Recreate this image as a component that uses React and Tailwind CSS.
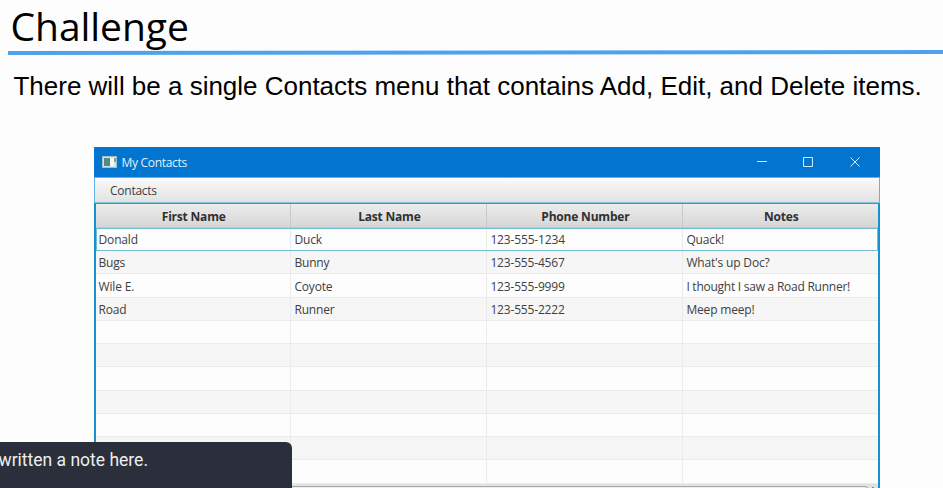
const columns = ['First Name', 'Last Name', 'Phone Number', 'Notes'];

const contacts = [
  ['Bugs', 'Bunny', '123-555-4567', "What's up Doc?"],
  ['Wile E.', 'Coyote', '123-555-9999', 'I thought I saw a Road Runner!'],
  ['Road', 'Runner', '123-555-2222', 'Meep meep!'],
  ['', '', '', ''],
  ['', '', '', ''],
  ['', '', '', ''],
  ['', '', '', ''],
  ['', '', '', ''],
  ['', '', '', ''],
  ['', '', '', ''],
];

const grid = 'grid grid-cols-[195.4px_196px_196px_1fr]';

function TitleBar() {
  return (
    <div className="flex h-[30px] shrink-0 items-center bg-[#0175cf] pl-2 text-[#e4f1fb]">
      <svg width="15" height="12" viewBox="0 0 15 12" className="shrink-0">
        <rect width="15" height="12" fill="#d8e3e3" />
        <rect x="0.5" y="0.5" width="14" height="11" fill="none" stroke="#a9bfc6" />
        <rect x="2" y="2" width="6" height="8" fill="#4d8d83" />
        <rect x="8" y="2" width="4" height="8" fill="#f5f7f5" />
        <rect x="12" y="2" width="2" height="4" fill="#69aa99" />
      </svg>
      <span className="ml-[4.5px] pt-[2px] text-[12px] tracking-[-0.3px]">My Contacts</span>
      <svg width="104" height="10" viewBox="0 0 104 10" className="mr-[20px] ml-auto" fill="none" stroke="#d5eafa">
        <path d="M1 4.5h10" />
        <path d="M47.5.5h9v9h-9z" />
        <path d="m94.5.5 9 9m0-9-9 9" />
      </svg>
    </div>
  );
}

function Contacts() {
  return (
    <div className="ml-[94px] flex h-[341px] w-[786px] flex-col overflow-hidden font-['Open_Sans','Noto_Sans',sans-serif] text-[12px] text-[#404040]">
      <TitleBar />
      <div className="flex h-[25px] shrink-0 items-center border-x border-t border-[#64b0e7] bg-linear-to-b from-[#fafafa] to-[#e2e2e2] pl-[15px]">
        <span className="pt-[2px] tracking-[-0.25px]">Contacts</span>
      </div>
      <div className="h-px shrink-0 bg-[#83c5d2]" />
      <div className="flex flex-1 flex-col border-x-2 border-t border-x-[#1592cf] border-t-[#2b9fbd] bg-[#fdfdfd]">
        <div className={`${grid} h-[24px] shrink-0 border-b border-[#c3c8c9] bg-linear-to-b from-[#ececec] to-[#d6d6d6]`}>
          {columns.map((name) => (
            <div key={name} className="flex items-center justify-center border-r border-[#c9c9c9] pt-[3px] pl-px text-[12px] font-bold tracking-[-0.2px] text-[#303030] last:border-r-0">
              {name}
            </div>
          ))}
        </div>
        <div className={`${grid} h-[23px] shrink-0 bg-[#fdfdfd] outline -outline-offset-1 outline-[#73bfd0]`}>
          {['Donald', 'Duck', '123-555-1234', 'Quack!'].map((value) => (
            <div key={value} className="flex items-center border-r border-[#e8e8e8] pl-[3px] tracking-[-0.15px] first:pl-[2.5px] last:border-r-0">{value}</div>
          ))}
        </div>
        {contacts.map((row, i) => (
          <div key={i} className={`${grid} h-[23.25px] shrink-0 border-b border-[#ebebeb] ${i % 2 ? 'bg-[#fdfdfd]' : 'bg-[#f6f6f6]'}`}>
            {row.map((value, j) => (
              <div key={j} className={`flex items-center border-r border-[#ebebeb] pl-[3px] whitespace-nowrap first:pl-[2.5px] last:border-r-0 ${i === 1 ? 'pt-[3px]' : 'pt-[2px]'} ${value.length > 20 ? 'tracking-[-0.25px]' : 'tracking-[-0.17px]'}`}>{value}</div>
            ))}
          </div>
        ))}
        <div className="flex h-[5px] shrink-0 bg-[#e2e2e2] pt-[2px]">
          <div className="h-[3px] w-[772px] rounded-tr-sm border-t border-r border-[#a9a9a9] bg-[#ededed]" />
          <span className="mt-px ml-1 h-[2px] w-[2px] bg-[#858585]" />
        </div>
      </div>
    </div>
  );
}

export default function App() {
  return (
    <div className="relative flex h-[488px] w-[943px] flex-col overflow-hidden bg-[#fdfdfd] text-black">
      <h1 className="h-[50px] shrink-0 pl-[10.5px] font-['Open_Sans',sans-serif] text-[39px] leading-[52px] tracking-[-0.05px] whitespace-nowrap">Challenge</h1>
      <svg width="943" height="6" viewBox="0 0 943 6" className="shrink-0">
        <path d="M8 1 943 0V4L8 5z" fill="#4ca3ec" />
      </svg>
      <p className="h-[91px] shrink-0 pt-[14px] pl-[13.5px] font-['Liberation_Sans',Arial,sans-serif] text-[26px] leading-[32px] tracking-[-0.01px] whitespace-nowrap">
        There will be a single Contacts menu that contains Add, Edit, and Delete items.
      </p>
      <Contacts />
      <div className="absolute top-[442px] left-0 h-[46px] w-[292px] rounded-tr-md bg-[#2a2f3b] pt-[6px] font-['Roboto',sans-serif] text-[17.5px] leading-6 whitespace-nowrap text-[#eeeeee]">
        <span className="-ml-[1.5px]">written a note here.</span>
      </div>
    </div>
  );
}
